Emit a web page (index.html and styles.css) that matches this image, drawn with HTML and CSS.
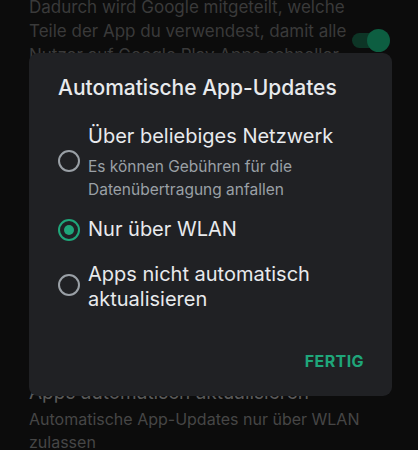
FILE: index.html
```html
<!DOCTYPE html>
<html lang="de">
<head>
<meta charset="utf-8">
<link rel="stylesheet" href="styles.css">
</head>
<body>
<div class="page">
  <div class="top">
    <div class="top-text">
      <div class="bg-line">Dadurch wird Google mitgeteilt, welche</div>
      <div class="bg-line">Teile der App du verwendest, damit alle</div>
      <div class="bg-line">Nutzer auf Google Play Apps schneller</div>
    </div>
    <div class="toggle"><span class="track"></span><span class="thumb"></span></div>
  </div>
  <div class="bottom">
    <div class="bg-heading">Apps automatisch aktualisieren</div>
    <div class="bg-body">Automatische App-Updates nur über WLAN<br>zulassen</div>
  </div>
</div>

<div class="dialog">
  <div class="title">Automatische App-Updates</div>
  <div class="options">
    <div class="option opt1">
      <span class="radio"></span>
      <div class="label">
        <div class="main">Über beliebiges Netzwerk</div>
        <div class="sub">Es können Gebühren für die<br>Datenübertragung anfallen</div>
      </div>
    </div>
    <div class="option opt2">
      <span class="radio checked"></span>
      <div class="label">
        <div class="main">Nur über WLAN</div>
      </div>
    </div>
    <div class="option opt3">
      <span class="radio"></span>
      <div class="label">
        <div class="main">Apps nicht automatisch<br>aktualisieren</div>
      </div>
    </div>
  </div>
  <div class="actions"><span class="btn">FERTIG</span></div>
</div>
</body>
</html>
```

FILE: styles.css
```css
html, body {
  margin: 0;
  padding: 0;
  background: #0c0c0c;
  width: 418px;
  height: 450px;
  overflow: hidden;
  font-family: Inter, Roboto, sans-serif;
}

.page {
  display: flex;
  flex-direction: column;
}

.top {
  display: flex;
  margin-top: -5px;
}

.top-text {
  padding-left: 29px;
  width: 315px;
}

.bg-line {
  font-size: 17px;
  line-height: 24px;
  color: #3a3a3a;
  white-space: nowrap;
}

.toggle {
  position: relative;
  width: 38px;
  height: 23px;
  margin-top: 34px;
  margin-left: 8px;
}

.track {
  position: absolute;
  left: 0;
  top: 4px;
  width: 33px;
  height: 15px;
  border-radius: 8px;
  background: #0d3526;
}

.thumb {
  position: absolute;
  left: 15px;
  top: 0;
  width: 23px;
  height: 23px;
  border-radius: 50%;
  background: #0d5e41;
}

.bottom {
  margin-top: 314px;
  padding-left: 29px;
}

.bg-heading {
  font-size: 19px;
  line-height: 24px;
  color: #5a5a5a;
  white-space: nowrap;
}

.bg-body {
  margin-top: 3px;
  font-size: 16px;
  line-height: 23px;
  color: #464646;
  white-space: nowrap;
}

.dialog {
  position: absolute;
  left: 29px;
  top: 53px;
  width: 363px;
  height: 343px;
  box-sizing: border-box;
  border-radius: 9px;
  background: #202124;
  padding: 21px 28px 25px 29px;
  display: flex;
  flex-direction: column;
}

.title {
  font-size: 21px;
  line-height: 28px;
  font-weight: 500;
  color: #e8eaed;
  white-space: nowrap;
}

.options {
  margin-top: 22px;
  display: flex;
  flex-direction: column;
}

.option {
  display: flex;
  align-items: center;
}

.opt1 { margin-bottom: 16px; }
.opt2 { margin-bottom: 20px; }

.radio {
  flex: none;
  box-sizing: border-box;
  width: 22px;
  height: 22px;
  border: 2px solid #9aa0a6;
  border-radius: 50%;
  margin-right: 8px;
  display: flex;
  align-items: center;
  justify-content: center;
}

.opt1 .radio { margin-top: -3px; }
.opt3 .radio { margin-top: -4px; }

.radio.checked {
  border-color: #1fa67a;
}

.radio.checked::after {
  content: "";
  width: 10px;
  height: 10px;
  border-radius: 50%;
  background: #1fa67a;
}

.main {
  font-size: 20px;
  line-height: 25px;
  color: #e8eaed;
  white-space: nowrap;
}

.sub {
  margin-top: 6px;
  font-size: 15.5px;
  line-height: 23px;
  color: #9aa0a6;
  white-space: nowrap;
}

.actions {
  margin-top: auto;
  display: flex;
  justify-content: flex-end;
}

.btn {
  font-size: 16px;
  line-height: 20px;
  font-weight: 700;
  letter-spacing: 0.4px;
  color: #1fa67a;
}
```
